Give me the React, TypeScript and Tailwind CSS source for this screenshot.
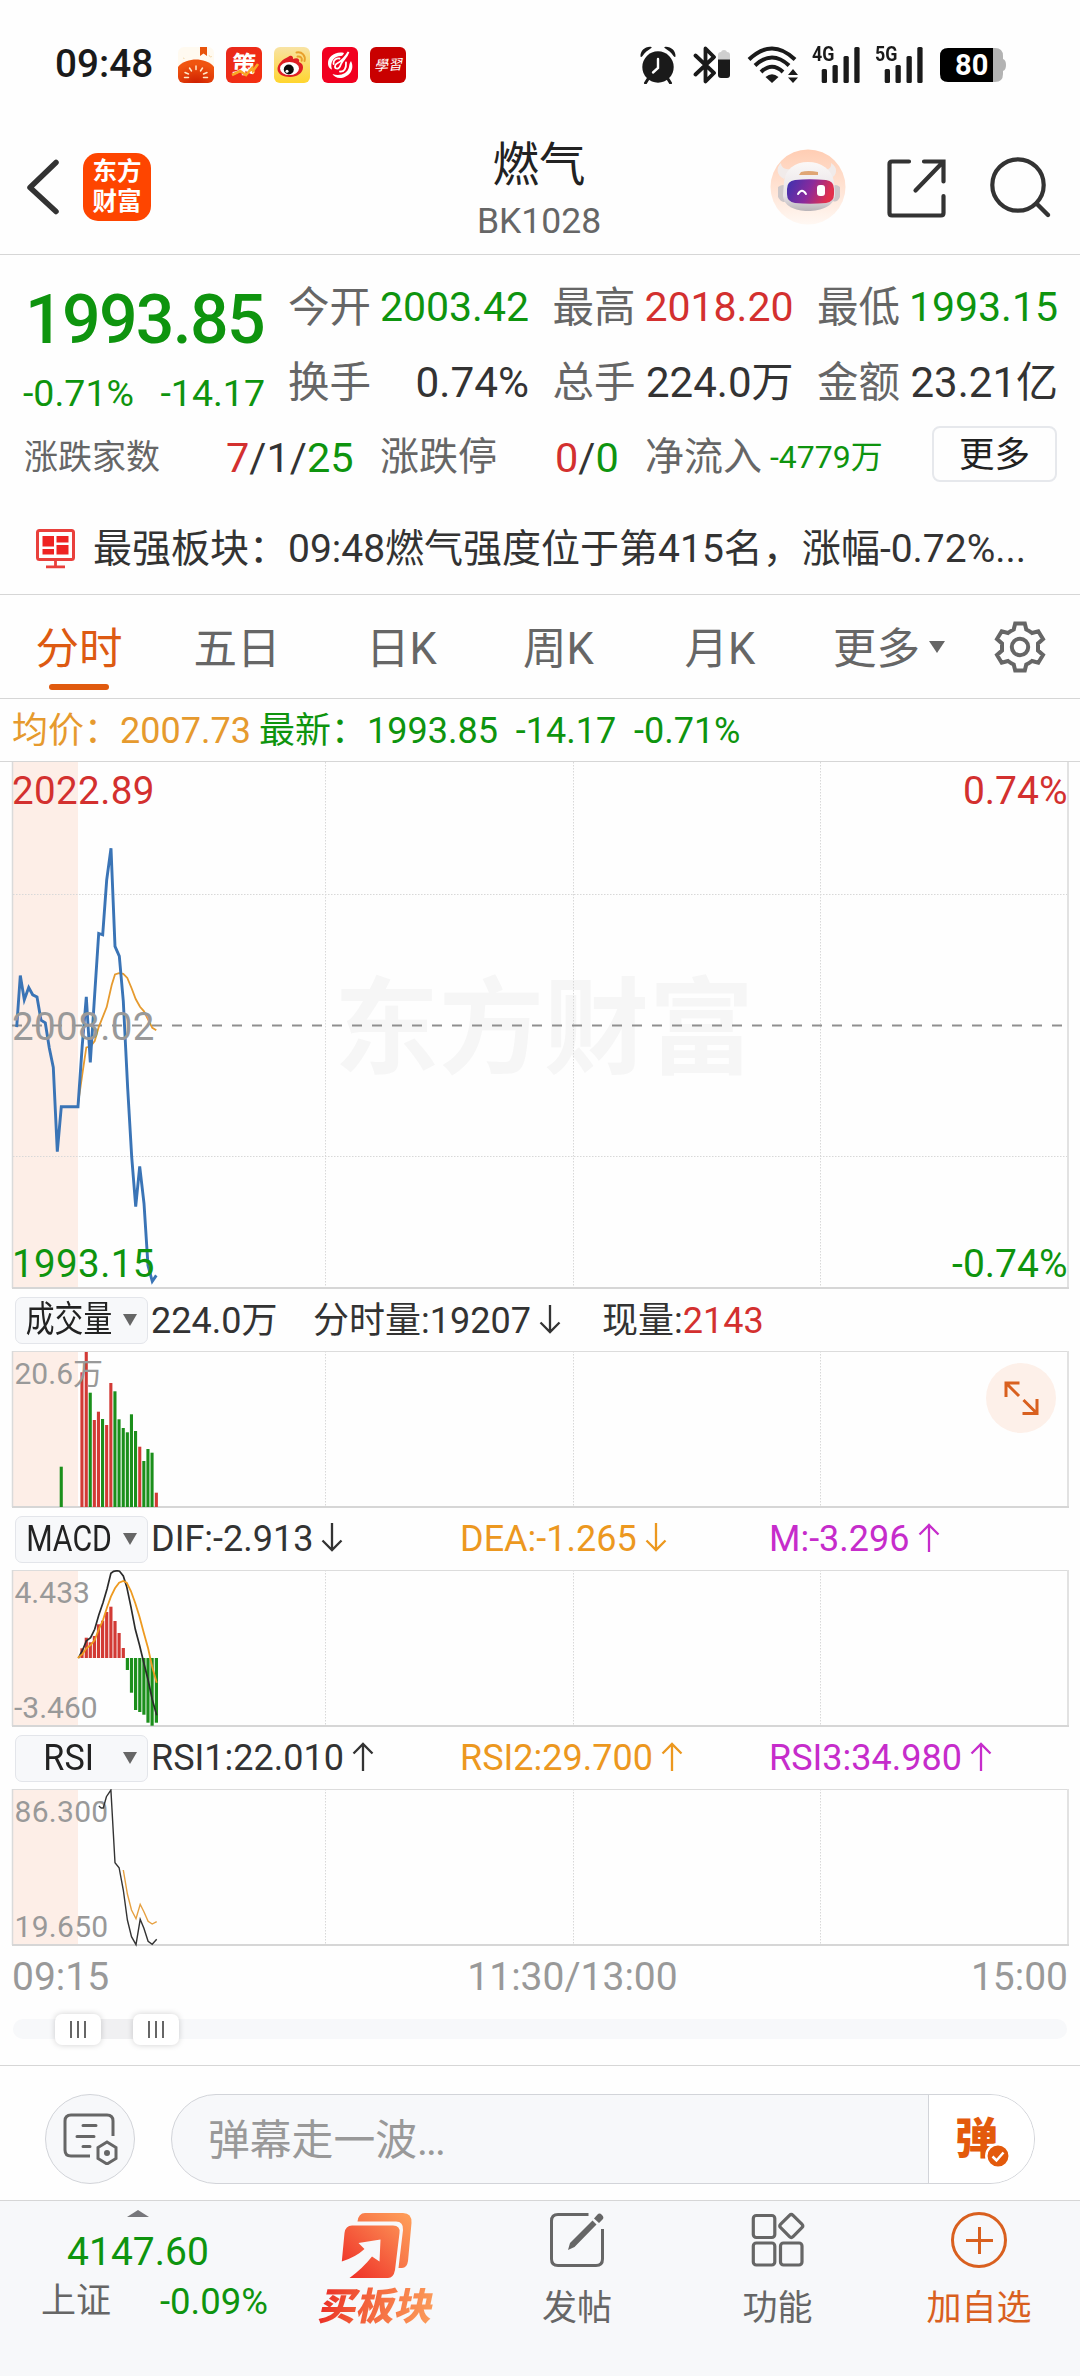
import React from "react";

const UP = "text-[#d3302f]";
const DOWN = "text-[#0e940e]";

/* ---------- status bar ---------- */

function AppIcons() {
  return (
    <div className="flex gap-[12px]">
      <svg width="36" height="36" viewBox="0 0 36 36">
        <defs>
          <clipPath id="a1"><rect width="36" height="36" rx="6" /></clipPath>
          <radialGradient id="g1" cx=".5" cy="1" r=".8">
            <stop offset="0" stopColor="#cf1f00" /><stop offset="1" stopColor="#f0540f" />
          </radialGradient>
        </defs>
        <g clipPath="url(#a1)">
          <rect width="36" height="36" fill="#fffaf0" />
          <path d="M22 0h7v9l-3.500-2.500L22 9z" fill="#e8540c" />
          <path d="M31 8l1 2 2-.5M5 11l1.500.5" stroke="#f5dcb0" fill="none" />
          <path d="M0 20C4 14.500 12 12.500 18 12.500S32 14.500 36 20V36H0z" fill="url(#g1)" />
          <path d="M18 19v3.500M11.500 21l2 3M24.500 21l-2 3M7 25.500l3.500 1.500M29 25.500L25.500 27M6.500 30.500h4M25.500 30.500h4" stroke="#ffe9c8" strokeWidth="1.500" strokeLinecap="round" />
        </g>
      </svg>
      <div className="relative flex h-[36px] w-[36px] items-center justify-center overflow-hidden rounded-[6px] bg-linear-to-br from-[#e8281c] to-[#f5300f] text-[24px] leading-[36px] font-bold text-white">
        <span className="-skew-x-3">策</span>
        <svg className="absolute inset-0" width="36" height="36" viewBox="0 0 36 36">
          <path d="M6 28l8-4 6 4 6-7 1 3 5-7" stroke="#f9a826" strokeWidth="2.600" fill="none" />
        </svg>
      </div>
      <svg width="36" height="36" viewBox="0 0 36 36">
        <defs><linearGradient id="g3" x2="0" y2="1"><stop stopColor="#f8e3a4" /><stop offset="1" stopColor="#ffd52e" /></linearGradient></defs>
        <rect width="36" height="36" rx="6" fill="url(#g3)" />
        <path d="M14 10c3-2.500 5.500-1 5 2 4-1.500 7-.5 6 3 3 1.200 4 3.200 4 5.500 0 5.500-6 9.500-13 9.500S3.500 27 3.500 22 9 12 14 10z" fill="#df1e24" />
        <ellipse cx="15.500" cy="21.500" rx="9.500" ry="6.600" fill="#fff" />
        <circle cx="14.800" cy="22.500" r="5" fill="#0c0c0c" />
        <circle cx="13" cy="24.300" r="1.500" fill="#fff" />
        <path d="M22.500 5.500c5.500-1.200 9.500 3.500 8 8.500M23.500 9.500c3-.6 5 1.600 4.200 4.200" stroke="#e8a02c" strokeWidth="2" fill="none" strokeLinecap="round" />
      </svg>
      <svg width="36" height="36" viewBox="0 0 36 36">
        <rect width="36" height="36" rx="6" fill="#f10020" />
        <path d="M22 6C13 4 6 10 6 16c0 4 2 6 4 6.500C7.500 15 12 9 19 9c1.500 0 2.500-1.500 3-3zM29 14c4.500 9-3 17-11 17-3.500 0-6.500-2-7.500-4 7 2.500 15 0 16.500-7 .3-2 .5-4 2-6z" fill="#fff" />
        <path d="M26.500 5c-2 6-6 8-7.500 12-1 3-2.500 5-4.500 4.500-2.500-.7-1.500-4 .5-5 3-1.500 7-4 11.500-11.500zM11.500 17c-.5-4 3-6 6-5.500M18 24.500c4 .5 6.500-3 6-9" stroke="#fff" strokeWidth="1.800" fill="none" strokeLinecap="round" />
      </svg>
      <div className="flex h-[36px] w-[36px] items-center justify-center rounded-[6px] bg-[#c90000] text-[14px] leading-[36px] text-white italic">
        <span className="-rotate-3">學習</span>
      </div>
    </div>
  );
}

function Signal({ label }: { label: string }) {
  return (
    <div className="relative h-[38px] w-[48px]">
      <span className="absolute -top-[1px] left-0 origin-left scale-x-[0.85] text-[21px] leading-[18px] font-bold">{label}</span>
      <svg className="absolute top-0 left-0" width="48" height="38" viewBox="0 0 48 38">
        <g fill="#1a1a1a">
          <rect x="9.700" y="23" width="5.300" height="14" rx="1.500" />
          <rect x="20.500" y="19" width="5.300" height="18" rx="1.500" />
          <rect x="31.500" y="10" width="5.300" height="27" rx="1.500" />
          <rect x="42.300" y="1" width="5.300" height="36" rx="1.500" />
        </g>
      </svg>
    </div>
  );
}

function StatusBar() {
  return (
    <div className="flex h-[130px] items-center pl-[55px] text-[#1a1a1a]">
      <div className="w-[123px] text-[38.700px] leading-[40px] font-medium"><span className="relative -top-px">09:48</span></div>
      <AppIcons />
      <svg className="ml-[233px]" width="38" height="38" viewBox="0 0 38 38" fill="#1a1a1a">
        <circle cx="19" cy="21" r="15.700" />
        <path d="M1.500 10.500C1 5 6 .5 11.500.8c1.500.2 1.500.9.500 1.500C8.500 4.500 6 6.500 3.500 10c-.8 1-1.800 1.300-2 .5zM36.500 10.500C37 5 32 .5 26.500.8c-1.500.2-1.500.9-.5 1.500C29.500 4.500 32 6.500 34.500 10c.8 1 1.800 1.300 2 .5z" />
        <path d="M9 33l-2.500 4M29 33l2.500 4" stroke="#1a1a1a" strokeWidth="3" strokeLinecap="round" />
        <path d="M19 13v9l-5 4.500" stroke="#fff" strokeWidth="2.400" fill="none" strokeLinecap="round" />
      </svg>
      <svg className="ml-[16px]" width="38" height="38" viewBox="0 0 38 38">
        <path d="M2.500 9.500L21 27l-8.500 8.500V2.500L21 11 2.500 28.500" stroke="#1a1a1a" strokeWidth="3.800" fill="none" strokeLinejoin="round" strokeLinecap="round" />
        <path d="M25 14V9q0-3 3-3 .5-2 3-2t3 2q3 0 3 3v5z" fill="#cfcfcf" />
        <path d="M25 13.500h12V29q0 3-3 3h-6q-3 0-3-3z" fill="#1a1a1a" />
      </svg>
      <svg className="ml-[16px]" width="52" height="38" viewBox="0 0 52 38">
        <g stroke="#1a1a1a" strokeWidth="4" fill="none">
          <path d="M2 13.500Q25 -8.500 48 13.500" /><path d="M8 19.500Q25 3.500 42 19.500" /><path d="M14 26Q25 15.500 36 26" />
        </g>
        <path d="M18.500 31Q25 25.500 31.500 31L25 37z" fill="#1a1a1a" />
        <path d="M41 29l5-6 5 6zM41 31.500l5 5.500 5-5.500z" fill="#1a1a1a" />
      </svg>
      <div className="ml-[13px]"><Signal label="4G" /></div>
      <div className="ml-[15px]"><Signal label="5G" /></div>
      <div className="relative ml-[17px] h-[34px] w-[66px]">
        <svg className="absolute inset-0" width="66" height="34" viewBox="0 0 66 34">
          <path d="M53 0h2q8 0 8 8v3q3 1 3 6t-3 6v3q0 8-8 8h-2z" fill="#b3b3b3" />
          <path d="M8 0h45v34H8q-8 0-8-8V8q0-8 8-8z" fill="#000" />
        </svg>
        <span className="absolute top-0 left-[15px] text-[29px] leading-[35px] font-bold text-white">80</span>
      </div>
    </div>
  );
}

/* ---------- header ---------- */

function RobotAvatar() {
  return (
    <svg width="76" height="76" viewBox="0 0 76 76">
      <defs>
        <linearGradient id="rb" x2="0" y2="1"><stop stopColor="#ffcdb3" /><stop offset="1" stopColor="#fff8f3" /></linearGradient>
        <linearGradient id="rv" x2="1" y2=".25"><stop stopColor="#3a32b0" /><stop offset=".55" stopColor="#8a2a9c" /><stop offset="1" stopColor="#e2304c" /></linearGradient>
        <linearGradient id="rh" x2="0" y2="1"><stop stopColor="#fbf8f7" /><stop offset=".7" stopColor="#e6e2e6" /><stop offset="1" stopColor="#b9b4b8" /></linearGradient>
      </defs>
      <circle cx="38" cy="38" r="37.500" fill="url(#rb)" />
      <path d="M14 30C6 26 6 18 11 14c0 4 4 7 9 6zM60 30c8-4 8-12 1-16 1 4-2 7-6 7z" fill="#f1ebea" />
      <path d="M8 38q6-4 8 0v14q-4 3-8-4zM70 38q-5-4-7 0v14q4 2 7-4z" fill="#cdc7c9" />
      <path d="M14 33C15 20 25 13 38 13s24 7 26 20l1 12c0 12-14 17-27 17S13 57 13 46z" fill="url(#rh)" />
      <path d="M31 23q7-2 17 0v3H29z" fill="#e0a674" />
      <path d="M17 40q0-8 8-9 14-1.500 31 0 8 1 8 9v5q0 8-8 9-16 1.500-31 0-8-1-8-9z" fill="url(#rv)" />
      <path d="M28 45q4-6.500 8 0" stroke="#fff" strokeWidth="2" fill="none" strokeLinecap="round" />
      <rect x="47" y="36" width="8" height="11" rx="3" fill="#fff" />
    </svg>
  );
}

function Header() {
  return (
    <header className="flex h-[125px] border-b border-[#d6d6d6]">
      <div className="flex w-[360px] items-start pt-[23px] pl-[26px]">
        <svg className="mt-[5px]" width="34" height="58" viewBox="0 0 34 58">
          <path d="M30 4.500L4 29.500l26 24" stroke="#333" strokeWidth="5.500" fill="none" strokeLinecap="round" strokeLinejoin="round" />
        </svg>
        <div className="ml-[23px] flex h-[68px] w-[68px] flex-col items-center justify-center rounded-[15px] bg-[#fe4500] text-[24.500px] leading-[30px] font-bold text-white">
          <span>东方</span>
          <span>财富</span>
        </div>
      </div>
      <div className="flex w-[360px] flex-col items-center pr-[2px]">
        <div className="mt-[7px] text-[46.500px] leading-[56px] text-[#222]">燃气</div>
        <div className="mt-[8px] text-[35.500px] leading-[40px] text-[#666]">BK1028</div>
      </div>
      <div className="flex w-[360px] items-start pt-[19px] pl-[50px]">
        <RobotAvatar />
        <svg className="mt-[8px] ml-[41px]" width="60" height="62" viewBox="0 0 60 62">
          <path d="M22 4.500H5q-2.500 0-2.500 2.500v49q0 2.500 2.500 2.500h49q2.500 0 2.500-2.500V39M37 4.500h19.500v20M56 5L28.500 33.500" stroke="#333" strokeWidth="4.200" fill="none" strokeLinecap="round" />
        </svg>
        <svg className="mt-[7px] ml-[43px]" width="64" height="64" viewBox="0 0 64 64">
          <circle cx="28" cy="29" r="25.700" stroke="#333" strokeWidth="4.200" fill="none" />
          <path d="M46.500 47.500L58 59" stroke="#333" strokeWidth="4.400" strokeLinecap="round" />
        </svg>
      </div>
    </header>
  );
}

/* ---------- quote summary ---------- */

const stats = [
  { label: "今开", value: "2003.42", style: `text-[41px] ${DOWN}` },
  { label: "最高", value: "2018.20", style: `text-[41px] ${UP}` },
  { label: "最低", value: "1993.15", style: `text-[41px] ${DOWN}` },
  { label: "换手", value: "0.74%", style: "text-[42.300px] text-[#333]" },
  { label: "总手", value: "224.0万", style: "text-[42px] text-[#333]" },
  { label: "金额", value: "23.21亿", style: "text-[42px] text-[#333]" },
];

function Summary() {
  return (
    <section className="h-[340px] border-b border-[#d6d6d6] pt-[15px]">
      <div className="flex h-[150px]">
        <div className={`w-[288px] pt-[15px] ${DOWN}`}>
          <div className="pl-[25px] text-[68px] leading-[70px] font-medium tracking-[-1.700px]">1993.85</div>
          <div className="flex w-[265px] justify-between pl-[23px] text-[37.500px] leading-[77px]">
            <span>-0.71%</span>
            <span>-14.17</span>
          </div>
        </div>
        <div className="grid grid-cols-3 gap-x-[23.500px]">
          {stats.map((s) => (
            <div key={s.label} className="flex w-[241px] justify-between leading-[75px]">
              <span className="text-[41.500px] text-[#666]">{s.label}</span>
              <span className={s.style}>{s.value}</span>
            </div>
          ))}
        </div>
      </div>
      <div className="flex h-[75px] items-center pl-[24px] text-[41.500px] leading-[75px]">
        <span className="w-[202px] text-[34px] text-[#666]">涨跌家数</span>
        <span className="w-[154px] text-[#333]">
          <span className={UP}>7</span>/1/<span className={DOWN}>25</span>
        </span>
        <span className="w-[175px] text-[39px] text-[#666]">涨跌停</span>
        <span className="w-[90px] text-[#333]">
          <span className={UP}>0</span>/<span className={DOWN}>0</span>
        </span>
        <span className="w-[125px] text-[39px] text-[#666]">净流入</span>
        <span className={`text-[32px] ${DOWN}`}>-4779万</span>
        <button className="mt-[-8px] mr-[23px] ml-auto h-[56px] w-[125px] rounded-[8px] border-2 border-[#e6e8ec] text-[35.500px] leading-[54px] text-[#222]">更多</button>
      </div>
      <div className="flex h-[99px] items-center pt-[8px] pl-[36px]">
        <svg width="40" height="40" viewBox="0 0 40 40">
          <rect x="1.500" y="1.500" width="36" height="29" rx="2" stroke="#e9403c" strokeWidth="3" fill="none" />
          <path d="M6.500 7H18v10.500H6.500zM20.500 7h12v6.500h-12zM6.500 20H18v5.500H6.500zM20.500 16h12v9.500h-12z" fill="#ee2322" />
          <path d="M19.500 31v6M10 37.800h19" stroke="#e9403c" strokeWidth="2.800" />
        </svg>
        <span className="mt-[1px] ml-[17px] text-[39px] leading-[60px] whitespace-nowrap text-[#333]">最强板块：09:48燃气强度位于第415名，涨幅-0.72%...</span>
      </div>
    </section>
  );
}

/* ---------- period tabs ---------- */

function Tabs() {
  return (
    <nav className="flex h-[104px] border-b border-[#d6d6d6] text-center text-[43.500px] leading-[109px] text-[#666]">
      <div className="relative w-[158px] text-[#dd5a12]">
        分时
        <div className="absolute top-[89px] left-[49px] h-[6px] w-[60px] rounded-full bg-[#e05a0e]" />
      </div>
      <div className="w-[158px]">五日</div>
      <div className="w-[171px]">日K</div>
      <div className="w-[143px]">周K</div>
      <div className="w-[180px]">月K</div>
      <div className="flex w-[160px] items-center pl-[23px]">
        <span className="mt-[6px]">更多</span>
        <div className="ml-[9px] h-0 w-0 border-x-8 border-t-[12px] border-x-transparent border-t-[#666]" />
      </div>
      <div className="flex w-[99px] items-center justify-center">
        <svg width="54" height="54" viewBox="-27 -27 54 54" fill="none" stroke="#666" strokeWidth="4" strokeLinejoin="miter">
          <path d="M-4.800 -23.500H4.800L6.300 -17.500Q9.500 -16 12 -14L18.300 -15.700L23 -8L18 -3.500V3.500L23 8L18.300 15.700L12 14Q9.500 16 6.300 17.500L4.800 23.500H-4.800L-6.300 17.500Q-9.500 16 -12 14L-18.300 15.700L-23 8L-18 3.500V-3.500L-23 -8L-18.300 -15.700L-12 -14Q-9.500 -16 -6.300 -17.500Z" />
          <circle r="8.200" />
        </svg>
      </div>
    </nav>
  );
}

/* ---------- charts ---------- */

const line = (pts: number[][], sx: number, sy: number, oy: number) =>
  pts.map(([x, y]) => `${(x / sx).toFixed(1)},${(oy + y / sy).toFixed(1)}`).join(" ");

const pricePts = [[50,790],[61,643],[73,712],[86,677],[98,698],[111,704],[123,770],[136,778],[148,850],[160,905],[172,1145],[184,1017],[234,1017],[247,840],[259,704],[271,891],[284,696],[296,523],[308,527],[320,370],[333,280],[345,560],[358,588],[370,716],[383,965],[395,1160],[407,1302],[419,1187],[432,1293],[444,1470],[457,1515],[469,1498]];
const avgPts = [[234,1010],[247,925],[259,848],[271,846],[284,830],[296,790],[320,733],[335,670],[345,640],[357,636],[370,638],[382,650],[395,680],[407,710],[420,732],[432,745],[444,768],[457,792],[469,799]];
const difPts = [[228,1134],[240,1110],[251,1082],[263,1073],[275,1048],[287,1005],[299,968],[311,926],[322,880],[330,874],[340,872],[347,874],[358,888],[368,920],[380,980],[393,1048],[405,1095],[418,1150],[430,1200],[442,1258],[455,1306]];
const deaPts = [[226,1134],[240,1122],[251,1105],[263,1095],[275,1080],[287,1048],[299,1020],[311,982],[322,950],[334,925],[346,908],[358,903],[368,908],[380,933],[393,970],[405,1010],[418,1060],[430,1105],[442,1160],[455,1208]];
const rsi1Pts = [[287,258],[294,264],[300,264],[309,230],[322,210],[334,428],[346,443],[358,510],[370,600],[382,650],[395,674],[407,598],[418,625],[430,664],[442,673],[455,658]];
const rsi2Pts = [[358,450],[370,522],[382,570],[395,596],[407,553],[418,575],[430,604],[442,612],[455,605]];

const RED = "#d23a35";
const GREEN = "#1b8f1b";
const volume: [number, number, string][] = [
  [61.3,1466.7,GREEN],[82,1372.3,RED],[86.3,1352,RED],[90.3,1392.7,GREEN],[94.4,1420,RED],[98.5,1411.7,RED],[102.6,1419,GREEN],[106.7,1425,RED],[110.9,1383,RED],[115,1391.3,GREEN],[119.1,1419.3,GREEN],[123.3,1428,GREEN],[127.4,1432.3,GREEN],[131.5,1414.3,GREEN],[135.6,1431,GREEN],[139.8,1446.7,RED],[143.9,1461,GREEN],[148,1449,GREEN],[152.1,1452.7,GREEN],[156.4,1492.7,RED],
];
const macd: [number, number][] = [
  [82,1648.3],[86.3,1637.7],[90.3,1642.3],[94.4,1636],[98.5,1624.3],[102.6,1620.7],[106.7,1612],[110.9,1606.7],[115,1621],[119.1,1633],[123.3,1648],[127.4,1670],[131.5,1692.7],[135.6,1710],[139.8,1712],[143.9,1714.7],[148,1722.7],[152.1,1725.7],[156.4,1722.7],
];

function Frame({ top, bottom, hideTop }: { top: number; bottom: number; hideTop?: boolean }) {
  return (
    <g>
      <rect x="13" y={top} width="65" height={bottom - top} fill="#fdeee7" />
      <g stroke="#d8d8d8" strokeWidth="1" strokeDasharray="1.500 1.500">
        {[325.5, 573.5, 820.5].map((x) => (
          <line key={x} x1={x} x2={x} y1={top} y2={bottom} />
        ))}
      </g>
      {!hideTop && <line x1="12" x2="1068" y1={top + 0.5} y2={top + 0.5} stroke="#dcdcdc" />}
      <line x1="12.500" x2="12.500" y1={top} y2={bottom} stroke="#dadada" strokeWidth="1.500" />
      <line x1="1068" x2="1068" y1={top} y2={bottom} stroke="#e2e2e2" strokeWidth="2" />
      <line x1="12" x2="1069" y1={bottom} y2={bottom} stroke="#d6d6d6" strokeWidth="2" />
    </g>
  );
}

function PriceChart() {
  return (
    <svg className="block" width="1080" height="527" viewBox="0 762 1080 527">
      <text x="334" y="1065" fontSize="105" fontWeight="700" fill="#f6f6f6">东方财富</text>
      <Frame top={762} bottom={1288} hideTop />
      <path d="M13 894.500H1067M13 1156.500H1067" stroke="#d8d8d8" strokeDasharray="1.500 1.500" />
      <path d="M12 1025.500H1067" stroke="#8f8f8f" strokeWidth="1.800" strokeDasharray="10 10" />
      <polyline points={line(avgPts, 3, 2.851, 750)} stroke="#e69a2e" strokeWidth="1.800" fill="none" />
      <polyline points={line(pricePts, 3, 2.851, 750)} stroke="#3a74b6" strokeWidth="2.900" fill="none" />
      <g fontSize="38.500" letterSpacing=".4">
        <text x="12" y="804.300" fill="#d3302f">2022.89</text>
        <text x="12" y="1040" fill="#999">2008.02</text>
        <text x="12" y="1276.700" fill="#0e940e">1993.15</text>
        <g textAnchor="end" letterSpacing="0">
          <text x="1067.500" y="804.300" fontSize="39" fill="#d3302f">0.74%</text>
          <text x="1067.500" y="1276.700" fontSize="39" fill="#0e940e">-0.74%</text>
        </g>
      </g>
    </svg>
  );
}

function VolumeChart() {
  return (
    <div className="relative h-[157px]">
      <svg className="block" width="1080" height="157" viewBox="0 1351 1080 157">
        <Frame top={1351} bottom={1507} />
        {volume.map(([x, y, c]) => (
          <rect key={x} x={x - 1.6} y={y} width="3.100" height={1507 - y} fill={c} />
        ))}
        <text x="14.500" y="1384" fontSize="30" fill="#999">20.6万</text>
      </svg>
      <button className="absolute top-[12px] left-[986px] flex h-[70px] w-[70px] items-center justify-center rounded-full bg-[#fdf0e9]">
        <svg width="36" height="36" viewBox="0 0 36 36" fill="none" stroke="#d9601f" strokeWidth="3">
          <path d="M16.500 3H3V17M3 3l13 13M19.500 33.500H34V19M34 33.500L20.500 20" />
        </svg>
      </button>
    </div>
  );
}

function MacdChart() {
  return (
    <svg className="block" width="1080" height="157" viewBox="0 1570 1080 157">
      <Frame top={1570} bottom={1726} />
      {macd.map(([x, y]) => (
        <rect key={x} x={x - 1.6} y={Math.min(y, 1658)} width="3.200" height={Math.abs(y - 1658)} fill={y < 1658 ? RED : GREEN} />
      ))}
      <polyline points={line(difPts, 2.904, 3, 1280)} stroke="#2b2b2b" strokeWidth="1.700" fill="none" />
      <polyline points={line(deaPts, 2.904, 3, 1280)} stroke="#ee9a20" strokeWidth="1.800" fill="none" />
      <g fontSize="30" fill="#999">
        <text x="14.500" y="1602.500">4.433</text>
        <text x="14" y="1717.500">-3.460</text>
      </g>
    </svg>
  );
}

function RsiChart() {
  return (
    <svg className="block" width="1080" height="158" viewBox="0 1789 1080 158">
      <Frame top={1789} bottom={1945} />
      <g fontSize="30" fill="#999">
        <text x="14.500" y="1821.500" letterSpacing=".3">86.300</text>
        <text x="14.500" y="1936.500" letterSpacing=".3">19.650</text>
      </g>
      <polyline points={line(rsi1Pts, 2.904, 3, 1720)} stroke="#333" strokeWidth="1.400" fill="none" />
      <polyline points={line(rsi2Pts, 2.904, 3, 1720)} stroke="#e6a040" strokeWidth="1.400" fill="none" />
    </svg>
  );
}

function Arrow({ up }: { up?: boolean }) {
  return (
    <svg className={`ml-[8px] inline-block align-[-1px] ${up ? "" : "rotate-180"}`} width="22" height="29" viewBox="0 0 22 29" fill="none" stroke="currentColor" strokeWidth="2.300">
      <path d="M11 29V2M1.500 11.500L11 2l9.500 9.500" />
    </svg>
  );
}

function Picker({ label, squeeze }: { label: string; squeeze: string }) {
  return (
    <button className="ml-[15px] flex h-[47px] w-[133px] items-center rounded-[7px] border border-[#e3e5ea] bg-[#f7f8fa] pl-[4px] text-[36px] leading-[46px] text-[#222]">
      <span className="flex w-[98px] justify-center whitespace-nowrap">
        <span className={squeeze}>{label}</span>
      </span>
      <span className="ml-[5px] h-0 w-0 border-x-[7.500px] border-t-[12px] border-x-transparent border-t-[#666]" />
    </button>
  );
}

const rowText = "flex h-[62px] items-center text-[36px] leading-[46px] whitespace-nowrap text-[#333]";

function Indicators() {
  return (
    <>
      <div className={rowText}>
        <Picker label="成交量" squeeze="scale-x-[0.8]" />
        <span className="mt-[2px] ml-[3px] w-[162px]">224.0万</span>
        <span className="mt-[2px] w-[289px]">分时量:19207<Arrow /></span>
        <span className="mt-[2px]">现量:<span className={UP}>2143</span></span>
      </div>
      <VolumeChart />
      <div className={rowText}>
        <Picker label="MACD" squeeze="scale-x-[0.84]" />
        <span className="ml-[3px] w-[309px]">DIF:-2.913<Arrow /></span>
        <span className="w-[309px] text-[#ec981f]">DEA:-1.265<Arrow /></span>
        <span className="text-[#c62ccb]">M:-3.296<Arrow up /></span>
      </div>
      <MacdChart />
      <div className={rowText}>
        <Picker label="RSI" squeeze="scale-x-[0.95]" />
        <span className="ml-[3px] w-[309px]">RSI1:22.010<Arrow up /></span>
        <span className="w-[309px] text-[#ec981f]">RSI2:29.700<Arrow up /></span>
        <span className="text-[#c62ccb]">RSI3:34.980<Arrow up /></span>
      </div>
      <RsiChart />
    </>
  );
}

function Handle() {
  return (
    <div className="flex h-[31px] w-[46px] items-center justify-center gap-[4.500px] rounded-[7px] bg-white shadow-[0_0_6px_rgba(0,0,0,0.18)]">
      <i className="h-[17px] w-[2.500px] bg-[#666]" />
      <i className="h-[17px] w-[2.500px] bg-[#666]" />
      <i className="h-[17px] w-[2.500px] bg-[#666]" />
    </div>
  );
}

function TimeAxis() {
  return (
    <>
      <div className="flex h-[58px] justify-between px-[12px] text-[39px] leading-[60px] text-[#999]">
        <span className="w-[200px]">09:15</span>
        <span className="pl-[65px]">11:30/13:00</span>
        <span className="w-[200px] text-right">15:00</span>
      </div>
      <div className="flex h-[60px] items-start px-[13px] pt-[14px]">
        <div className="flex h-[20px] w-full items-center rounded-full bg-[#f7f8fa]">
          <div className="ml-[42px] flex h-[20px] items-center bg-[#f0f0f2]">
            <Handle />
            <div className="w-[32px]" />
            <Handle />
          </div>
        </div>
      </div>
    </>
  );
}

/* ---------- comment bar ---------- */

function CommentBar() {
  return (
    <div className="flex h-[135px] items-start border-t border-[#d6d6d6] pt-[28px] pl-[45px]">
      <button className="flex h-[90px] w-[90px] items-center justify-center rounded-full border border-[#d2d4d9] bg-[#f7f8fa]">
        <svg width="56" height="52" viewBox="0 0 56 52" fill="none" stroke="#666" strokeWidth="3" strokeLinecap="round">
          <path d="M28 43H9q-6 0-6-6V8q0-6 6-6h36q6 0 6 6v15" strokeLinecap="butt" />
          <path d="M21 12.500h13M15 23.500h17M21 33.500h7" />
          <path d="M45 29l9 5.500v11L45 51l-9-5.500v-11z" strokeLinecap="butt" />
          <circle cx="45" cy="40" r="3" fill="#666" stroke="none" />
        </svg>
      </button>
      <div className="ml-[36px] flex h-[90px] w-[864px] overflow-hidden rounded-full border border-[#d2d4d9] bg-[#f7f8fa]">
        <div className="w-[756px] pl-[36px] text-[41.800px] leading-[92px] text-[#999]">弹幕走一波<span className="tracking-[-2px]">...</span></div>
        <button className="relative flex-1 border-l border-[#d2d4d9] bg-white">
          <span className="absolute top-[17px] left-[26px] text-[43px] leading-[54px] font-black text-[#e35a0c]">弹</span>
          <svg className="absolute top-[48px] left-[56px]" width="26" height="26" viewBox="0 0 26 26">
            <circle cx="13" cy="13" r="11.700" fill="#e35a0c" stroke="#fff" strokeWidth="2.500" />
            <path d="M7.500 13.500l4 4 7-8" stroke="#fff" strokeWidth="2.500" fill="none" />
          </svg>
        </button>
      </div>
    </div>
  );
}

/* ---------- bottom navigation ---------- */

function BottomBar() {
  return (
    <footer className="flex h-[176px] border-t border-[#d6d6d6] bg-[#f7f8fa] text-[35px] leading-[42px] text-[#666]">
      <div className="flex w-[276px] flex-col items-center">
        <div className="mt-[9px] h-0 w-0 border-x-[11px] border-b-[7px] border-x-transparent border-b-[#77777b]" />
        <div className={`mt-[11px] text-[39px] leading-[48px] ${DOWN}`}>4147.60</div>
        <div className="mt-[1px] flex w-[276px] justify-between pr-[8px] pl-[41px] text-[35px] leading-[49px]">
          <span>上证</span>
          <span className={`text-[36.500px] ${DOWN}`}>-0.09%</span>
        </div>
      </div>
      <div className="flex w-[201px] flex-col items-center pt-[12px]">
        <svg width="72" height="66" viewBox="0 0 72 66">
          <defs>
            <linearGradient id="b1" y1="1" x2="1" y2="0"><stop stopColor="#ee2a24" /><stop offset="1" stopColor="#fb8a52" /></linearGradient>
            <linearGradient id="b2" y1="1" x2="1" y2="0"><stop stopColor="#f2583a" /><stop offset="1" stopColor="#ffa05a" /></linearGradient>
          </defs>
          <path d="M16.500 8.500Q17.500 0 24 0H62Q71 0 70.500 10L67 48Q66 55 61 55H57.500L62 17Q62.500 8.500 55 8.500Z" fill="url(#b2)" />
          <path d="M3.500 20Q4.500 12.500 11 12.500H52Q59.500 12.500 58.500 20L54 57Q52.500 65 47 65H8.500Q22 55 31 43.500L38.500 48.500 39.500 26.500 17.500 30 23.500 36Q15 44 .8 48.500Z" fill="url(#b1)" />
        </svg>
        <div className="mt-[6px] ml-[2px] -skew-x-12 bg-linear-to-r from-[#ea2c26] to-[#fb9c5a] bg-clip-text text-[38px] leading-[44px] font-black text-transparent">买板块</div>
      </div>
      <div className="flex w-[200px] flex-col items-center pt-[11px]">
        <svg width="56" height="56" viewBox="0 0 56 56" fill="none" stroke="#666" strokeWidth="3">
          <path d="M39.500 2.500H9q-6.500 0-6.500 6.500v38q0 6.500 6.500 6.500h38q6.500 0 6.500-6.500V17" />
          <path d="M19 38l2-7L43.500 8.500 47.500 12.500 25.500 35z M45 6.500l3.500-4q2-2 4.500.5t.5 4.500L50 11z" fill="#666" stroke="none" />
        </svg>
        <div className="mt-[19.500px]">发帖</div>
      </div>
      <div className="flex w-[201px] flex-col items-center pt-[11px]">
        <svg width="54" height="56" viewBox="0 0 54 56" fill="none" stroke="#666" strokeWidth="3.200">
          <rect x="2.300" y="3.500" width="21.500" height="22" rx="3" />
          <rect x="2.300" y="31" width="21.500" height="22" rx="3" />
          <rect x="29.500" y="31" width="21.500" height="22" rx="3" />
          <rect x="31.500" y="5.200" width="17.500" height="17.500" rx="2.500" transform="rotate(45 40.250 14)" />
        </svg>
        <div className="mt-[19.500px]">功能</div>
      </div>
      <div className="flex w-[202px] flex-col items-center pt-[11px] text-[#d9601f]">
        <svg width="58" height="56" viewBox="0 0 58 56" fill="none" stroke="currentColor" strokeWidth="3">
          <circle cx="29" cy="28" r="26.500" />
          <path d="M29.500 15v27M16 28.500h27" />
        </svg>
        <div className="mt-[19.500px]">加自选</div>
      </div>
    </footer>
  );
}

export default function App() {
  return (
    <div className="h-[2376px] w-[1080px] overflow-hidden bg-[#fefefe] font-[Roboto,'Noto_Sans_CJK_SC',sans-serif]">
      <StatusBar />
      <Header />
      <Summary />
      <Tabs />
      <div className="flex h-[63px] items-center border-b border-[#d6d6d6] pt-[1px] pl-[12px] text-[36px] leading-[62px] whitespace-pre">
        <span className="w-[247px] text-[#e69a2e]">均价：2007.73</span>
        <span className={DOWN}>最新：1993.85  -14.17  -0.71%</span>
      </div>
      <PriceChart />
      <Indicators />
      <TimeAxis />
      <CommentBar />
      <BottomBar />
    </div>
  );
}
